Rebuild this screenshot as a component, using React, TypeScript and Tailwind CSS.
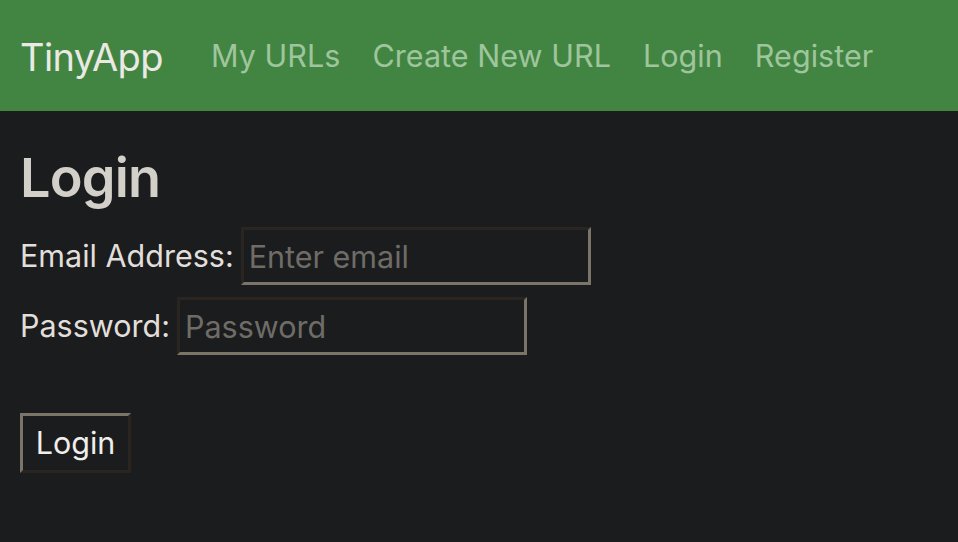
export default function App() {
  return (
    <div className="min-h-[542px] bg-[#1b1c1e] font-['Inter','Liberation_Sans',sans-serif]">
      {/* Navbar */}
      <nav className="h-[111px] bg-[#428542] flex items-center px-[20px]">
        <a href="#" className="text-[38px] leading-none text-[#ebe9e4] tracking-[-0.6px] mr-[48px] pt-[2px]">
          TinyApp
        </a>
        <div className="flex items-center gap-[32px] text-[30.5px] leading-none text-[#9fc59d] tracking-[0.05px] pt-[2px]">
          <a href="#">My URLs</a>
          <a href="#">Create New URL</a>
          <a href="#">Login</a>
          <a href="#">Register</a>
        </div>
      </nav>

      {/* Login form */}
      <main className="px-[20px] pt-[31px]">
        <h1 className="text-[54px] leading-[72px] font-semibold text-[#d3cfc9] tracking-[-0.8px] mb-[13px]">
          Login
        </h1>
        <form className="flex flex-col gap-[12px]" onSubmit={(e) => e.preventDefault()}>
          <div className="flex items-center gap-[7px]">
            <label className="text-[30.5px] text-[#e2dfda]">Email Address:</label>
            <input
              type="email"
              placeholder="Enter email"
              className="w-[350px] h-[58px] bg-[#1b1c1e] border-[3px] border-t-[#2a2520] border-l-[#2a2520] border-b-[#7b7468] border-r-[#7b7468] px-[5px] text-[30.5px] text-[#e2dfda] placeholder:text-[#6f6c67] outline-none"
            />
          </div>
          <div className="flex items-center gap-[7px]">
            <label className="text-[30.5px] text-[#e2dfda]">Password:</label>
            <input
              type="password"
              placeholder="Password"
              className="w-[350px] h-[58px] bg-[#1b1c1e] border-[3px] border-t-[#2a2520] border-l-[#2a2520] border-b-[#7b7468] border-r-[#7b7468] px-[5px] text-[30.5px] text-[#e2dfda] placeholder:text-[#6f6c67] outline-none"
            />
          </div>
          <div className="pt-[46px]">
            <button
              type="submit"
              className="w-[111px] h-[60px] bg-[#1b1c1e] border-[3px] border-t-[#7b7468] border-l-[#7b7468] border-b-[#2a2520] border-r-[#2a2520] text-[30.5px] text-[#f0eeea]"
            >
              Login
            </button>
          </div>
        </form>
      </main>
    </div>
  );
}
